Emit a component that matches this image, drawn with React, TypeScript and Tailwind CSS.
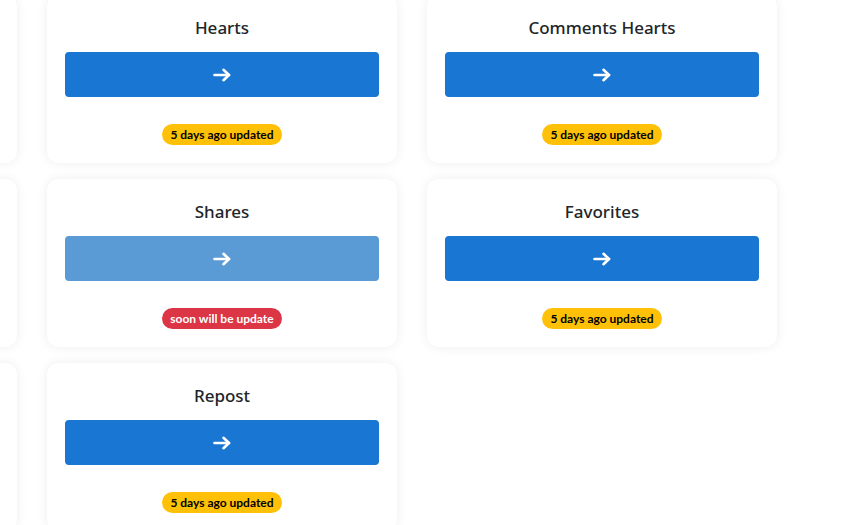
import React from "react";

type Item = { title: string; status: "ok" | "soon" } | null;

const items: Item[] = [
  null,
  { title: "Hearts", status: "ok" },
  { title: "Comments Hearts", status: "ok" },
  null,
  { title: "Shares", status: "soon" },
  { title: "Favorites", status: "ok" },
  null,
  { title: "Repost", status: "ok" },
];

function Arrow() {
  return (
    <svg width="18" height="14" viewBox="0 0 18 14" fill="none" stroke="white" strokeWidth="2.6" strokeLinecap="round" strokeLinejoin="round">
      <path d="M1.5 7H16" />
      <path d="M10.5 1.8L16 7l-5.5 5.2" />
    </svg>
  );
}

function Card({ item }: { item: Item }) {
  if (!item) {
    return <div className="h-[168px] rounded-xl bg-white shadow-[0_0_12px_rgba(0,0,0,0.07)]" />;
  }
  const soon = item.status === "soon";
  return (
    <div className="flex h-[168px] flex-col items-center rounded-xl bg-white px-[18px] pt-[21px] shadow-[0_0_12px_rgba(0,0,0,0.07)]">
      <div className="h-[24px] font-['Noto_Sans',sans-serif] text-[17px] leading-[24px] font-medium text-[#212529]">{item.title}</div>
      <button
        className={`mt-[12px] flex h-[45px] w-full shrink-0 items-center justify-center rounded-[4px] ${
          soon ? "bg-[#5a9bd5]" : "bg-[#1976d3]"
        }`}
      >
        <Arrow />
      </button>
      <div className="mt-[27px] flex">
        {soon ? (
          <span className="inline-flex h-[21px] items-center rounded-full bg-[#dc3545] px-[8px] font-['Lato',sans-serif] text-[12px] leading-none font-bold text-white">
            soon will be update
          </span>
        ) : (
          <span className="inline-flex h-[21px] items-center rounded-full bg-[#ffc107] px-[8px] font-['Lato',sans-serif] text-[12px] leading-none font-bold text-black">
            5 days ago updated
          </span>
        )}
      </div>
    </div>
  );
}

export default function App() {
  return (
    <div className="h-[525px] w-[855px] overflow-hidden bg-white font-['Noto_Sans',sans-serif]">
      <div className="ml-[-333px] mt-[-5px] grid grid-cols-[350px_350px_350px] gap-x-[30px] gap-y-[16px]">
        {items.map((it, i) => (
          <Card key={i} item={it} />
        ))}
      </div>
    </div>
  );
}
